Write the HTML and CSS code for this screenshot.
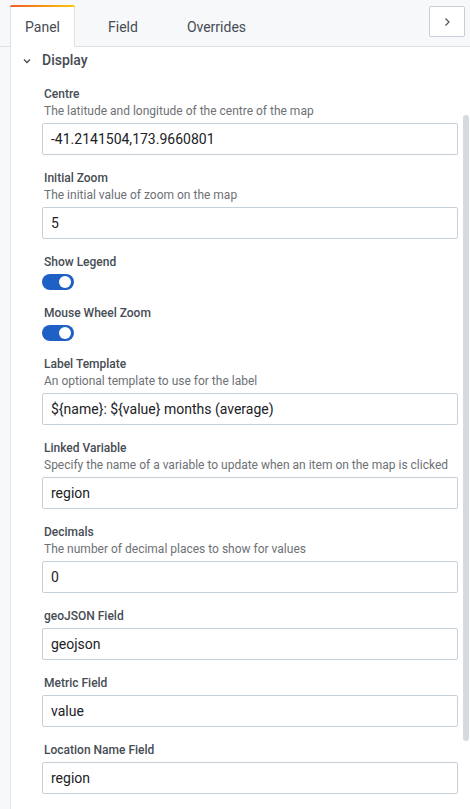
FILE: index.html
```html
<!DOCTYPE html>
<html>
<head>
<meta charset="utf-8">
<link rel="stylesheet" href="styles.css">
</head>
<body>
<div class="tabs">
  <div class="tab active">Panel</div>
  <div class="tab">Field</div>
  <div class="tab">Overrides</div>
  <div class="spacer"></div>
  <button class="collapse-btn"><svg width="8" height="10" viewBox="0 0 8 10"><path d="M2.5 1.5 L6 5 L2.5 8.5" fill="none" stroke="#52545c" stroke-width="1.2"/></svg></button>
</div>
<div class="content">
  <div class="section-head">
    <svg class="chev" width="10" height="8" viewBox="0 0 10 8"><path d="M2 2.5 L5 5.5 L8 2.5" fill="none" stroke="#464c54" stroke-width="1.3"/></svg>
    <span>Display</span>
  </div>
  <div class="fields">
    <div class="field">
      <div class="label">Centre</div>
      <div class="desc">The latitude and longitude of the centre of the map</div>
      <div class="input">-41.2141504,173.9660801</div>
    </div>
    <div class="field">
      <div class="label">Initial Zoom</div>
      <div class="desc">The initial value of zoom on the map</div>
      <div class="input">5</div>
    </div>
    <div class="field">
      <div class="label">Show Legend</div>
      <div class="switch"><span class="knob"></span></div>
    </div>
    <div class="field">
      <div class="label">Mouse Wheel Zoom</div>
      <div class="switch"><span class="knob"></span></div>
    </div>
    <div class="field">
      <div class="label">Label Template</div>
      <div class="desc">An optional template to use for the label</div>
      <div class="input">${name}: ${value} months (average)</div>
    </div>
    <div class="field">
      <div class="label">Linked Variable</div>
      <div class="desc">Specify the name of a variable to update when an item on the map is clicked</div>
      <div class="input">region</div>
    </div>
    <div class="field">
      <div class="label">Decimals</div>
      <div class="desc">The number of decimal places to show for values</div>
      <div class="input">0</div>
    </div>
    <div class="field">
      <div class="label">geoJSON Field</div>
      <div class="input">geojson</div>
    </div>
    <div class="field">
      <div class="label">Metric Field</div>
      <div class="input">value</div>
    </div>
    <div class="field">
      <div class="label">Location Name Field</div>
      <div class="input">region</div>
    </div>
  </div>
  <div class="scrollbar"></div>
</div>
</body>
</html>
```
FILE: styles.css
```css
html, body {
  margin: 0;
  padding: 0;
}
body {
  background: #f7f8fa;
  font-family: Roboto, "Liberation Sans", sans-serif;
  color: #464c54;
  width: 470px;
  height: 809px;
  overflow: hidden;
}
.tabs {
  display: flex;
  align-items: flex-end;
  height: 46px;
  padding-left: 10px;
  padding-right: 5px;
  border-bottom: 1px solid #dce1e6;
  gap: 1px;
}
.tab {
  height: 40px;
  line-height: 42px;
  padding: 0 16px;
  font-size: 14px;
  color: #464c54;
  box-sizing: border-box;
}
.tab.active {
  width: 65px;
  padding: 1px 0 0;
  text-align: center;
  background: #fff;
  border-left: 1px solid #dce1e6;
  border-right: 1px solid #dce1e6;
  position: relative;
  margin-bottom: -1px;
  height: 41px;
  line-height: 40px;
  margin-right: 16px;
}
.tab.active::before {
  content: "";
  position: absolute;
  left: -1px;
  right: -1px;
  top: -1px;
  height: 2px;
  background: linear-gradient(90deg, #f05a28, #fbca0a);
  border-radius: 2px 2px 0 0;
}
.tab + .tab {
  margin-right: 16px;
}
.spacer {
  flex: 1;
}
.collapse-btn {
  align-self: flex-start;
  margin-top: 6px;
  width: 36px;
  height: 31px;
  background: #fff;
  border: 1px solid #c7d0d9;
  border-radius: 2px;
  display: flex;
  align-items: center;
  justify-content: center;
  padding: 0;
}
.content {
  position: relative;
  background: #fff;
  margin-left: 10px;
  border-left: 1px solid #e4e7eb;
  height: 762px;
}
.section-head {
  display: flex;
  align-items: center;
  height: 26px;
  padding-left: 11px;
  font-size: 14px;
  font-weight: 500;
  color: #464c54;
}
.chev {
  margin-right: 10px;
  margin-top: 1px;
}
.fields {
  padding: 13px 12px 0 31px;
}
.field {
  margin-bottom: 15px;
}
.label {
  font-size: 12px;
  font-weight: 500;
  line-height: 17px;
  padding-left: 2px;
  color: #464c54;
}
.desc {
  font-size: 12px;
  line-height: 17px;
  padding-left: 2px;
  color: #6e7175;
}
.input {
  margin-top: 3px;
  height: 32px;
  box-sizing: border-box;
  border: 1px solid #c7d0d9;
  border-radius: 2px;
  background: #fff;
  padding: 0 8px;
  font-size: 14px;
  line-height: 30px;
  color: #202226;
  white-space: nowrap;
}
.switch {
  margin-top: 3px;
  width: 32px;
  height: 16px;
  border-radius: 8px;
  background: #1f60c4;
  position: relative;
}
.knob {
  position: absolute;
  right: 3px;
  top: 2px;
  width: 12px;
  height: 12px;
  border-radius: 50%;
  background: #fff;
}
.scrollbar {
  position: absolute;
  right: 1px;
  top: 68px;
  width: 6px;
  height: 626px;
  background: #d6dbe0;
  border-radius: 3px;
}
```
